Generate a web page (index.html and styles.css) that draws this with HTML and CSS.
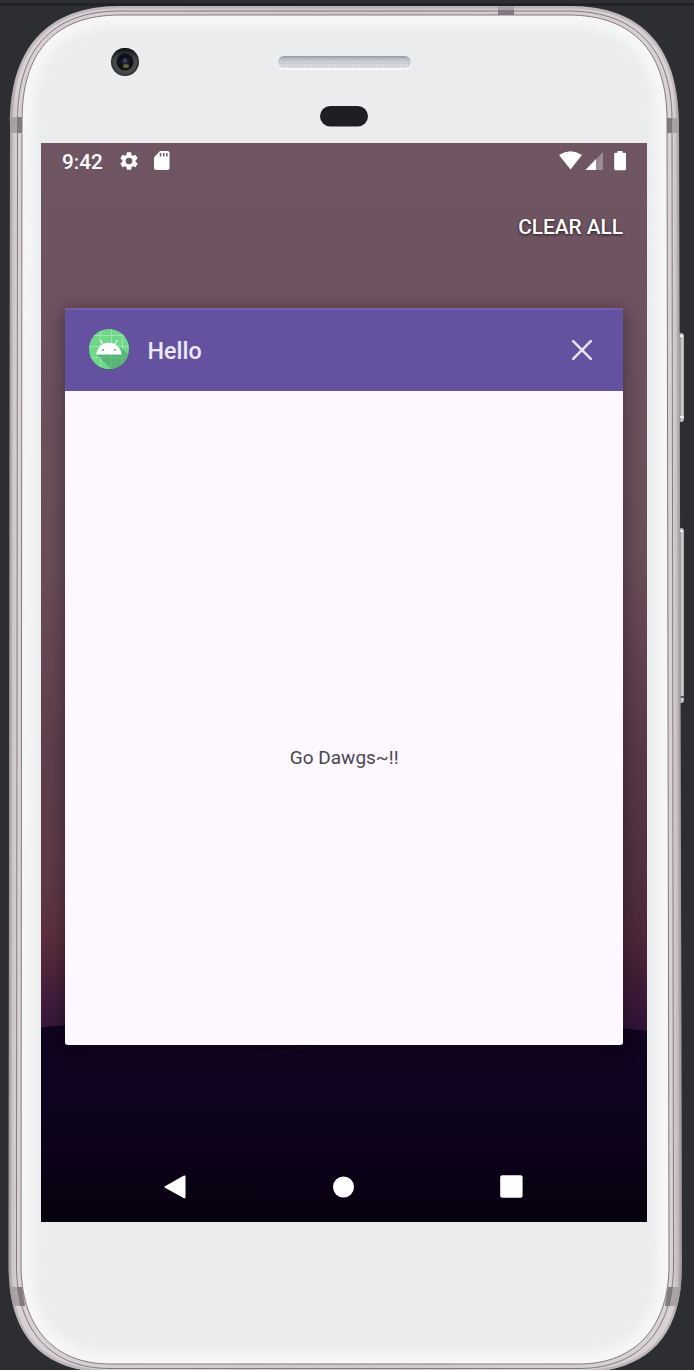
FILE: index.html
```html
<!DOCTYPE html>
<html lang="en">
<head>
<meta charset="utf-8">
<title>Recent apps</title>
<link rel="stylesheet" href="styles.css">
</head>
<body>
<div class="stage">
  <svg class="shell" width="694" height="1370" viewBox="0 0 694 1370" aria-hidden="true">
    <defs>
      <linearGradient id="rim" x1="8" x2="682" y1="0" y2="0" gradientUnits="userSpaceOnUse">
        <stop offset="0" stop-color="#a89fa4"/><stop offset=".006" stop-color="#cac3c6"/><stop offset=".014" stop-color="#d8d2d5"/>
        <stop offset=".5" stop-color="#cec8ca"/>
        <stop offset=".986" stop-color="#d8d2d4"/><stop offset=".994" stop-color="#c2bbbe"/><stop offset="1" stop-color="#a69da1"/>
      </linearGradient>
      <linearGradient id="volume" x1="0" x2="1" y1="0" y2="0">
        <stop offset="0" stop-color="#8f9292"/><stop offset=".5" stop-color="#8d9290"/><stop offset=".75" stop-color="#d0d6d2"/><stop offset="1" stop-color="#a5aaa7"/>
      </linearGradient>
      <linearGradient id="grille" x1="0" x2="0" y1="0" y2="1">
        <stop offset="0" stop-color="#989aa3"/><stop offset=".35" stop-color="#c9cbd3"/><stop offset="1" stop-color="#e6e7eb"/>
      </linearGradient>
      <pattern id="mesh" width="3" height="3" patternUnits="userSpaceOnUse"><path d="M0 .5H3M.5 0V3" stroke="#b4b7c4" stroke-width=".6" opacity=".55"/></pattern>
      <radialGradient id="lens"><stop offset="0" stop-color="#252a42"/><stop offset=".45" stop-color="#0b0d12"/><stop offset=".58" stop-color="#17181a"/><stop offset=".65" stop-color="#4b4d50"/><stop offset=".86" stop-color="#414346"/><stop offset="1" stop-color="#222426"/></radialGradient>
      <linearGradient id="lensShade" x1="0" x2="0" y1="0" y2="1"><stop offset="0" stop-color="#0c0d0e" stop-opacity=".9"/><stop offset=".4" stop-color="#0c0d0e" stop-opacity="0"/></linearGradient>
      <filter id="soft" x="-10%" y="-10%" width="120%" height="120%"><feGaussianBlur stdDeviation="5"/></filter>
      <clipPath id="faceClip"><path d="M22 120C22 55 52 15 120 15H568C636 15 667 55 667 120L669 1265C669 1325 637 1364 579 1364H110C52 1364 21 1325 21 1265Z"/></clipPath>
      <clipPath id="bodyClip"><path d="M10 125C10 50 45 6 120 6H570C645 6 679 50 679 125L682 1265C682 1340 645 1373 575 1373H115C45 1373 8.500 1340 8.500 1265Z"/></clipPath>
    </defs>
    <path d="M0 4.500H694" stroke="#1d1e21" stroke-width="2"/>
    <rect x="676" y="333" width="8" height="89" rx="3" fill="url(#volume)"/>
    <path d="M680 336H683M680 417H684" stroke="#eceeed" stroke-width="2"/>
    <rect x="676" y="528" width="8" height="175" rx="3" fill="url(#volume)"/>
    <path d="M680 531H683" stroke="#eceeed" stroke-width="2"/><path d="M680 697H684" stroke="#5d6260" stroke-width="2"/>
    <path d="M10 125C10 50 45 6 120 6H570C645 6 679 50 679 125L682 1265C682 1340 645 1373 575 1373H115C45 1373 8.500 1340 8.500 1265Z" fill="url(#rim)"/>
    <g clip-path="url(#bodyClip)">
      <path d="M10 125C10 50 45 6 120 6H570C645 6 679 50 679 125L682 1265C682 1340 645 1373 575 1373H115C45 1373 8.500 1340 8.500 1265Z" fill="none" stroke="#8f868b" stroke-width="5" opacity=".35"/>
      <path d="M17.500 120C17.500 52 50 11 120 11H568C638 11 672 52 672 120L673.500 1265C673.500 1329 640 1368.500 579 1368.500H110C49 1368.500 16.500 1329 16.500 1265Z" fill="none" stroke="#85797f" stroke-width="1"/>
      <path d="M9 117H22V133H9ZM498 4H514V15H498ZM667 118H681V133H667ZM8 1287H22L25 1306H8ZM668 1287H683V1306H665Z" fill="#a29ca0" opacity=".85"/>
      <path d="M17 117H22V133H17ZM498 10H514V15H498ZM667 118H672V133H667ZM17 1287H22L25 1306H20ZM668 1287H673L670 1306H665Z" fill="#777176" opacity=".8"/>
    </g>
    <g clip-path="url(#faceClip)">
      <path d="M0 0H694V1370H0Z" fill="#ebecee"/>
      <path d="M22 120C22 55 52 15 120 15H568C636 15 667 55 667 120L669 1265C669 1325 637 1364 579 1364H110C52 1364 21 1325 21 1265Z" fill="none" stroke="#f6f6f8" stroke-width="24" filter="url(#soft)"/>
    </g>
    <path d="M22 120C22 55 52 15 120 15H568C636 15 667 55 667 120L669 1265C669 1325 637 1364 579 1364H110C52 1364 21 1325 21 1265Z" fill="none" stroke="#81787d" stroke-width="1"/>
    <circle cx="125" cy="62" r="14" fill="url(#lens)"/><circle cx="125" cy="62" r="14" fill="url(#lensShade)"/>
    <circle cx="125" cy="60.500" r="2" fill="#3b426b"/><ellipse cx="126" cy="66" rx="3" ry="2" fill="#62652d"/>
    <rect x="277.500" y="56.500" width="134" height="13.500" rx="6.500" fill="#f8f8f9"/>
    <rect x="278" y="56" width="133" height="12" rx="6" fill="url(#grille)"/>
    <rect x="278" y="58" width="133" height="10" rx="5" fill="url(#mesh)"/>
    <rect x="320" y="106" width="48" height="20.500" rx="10.250" fill="#1d1f22"/>
  </svg>

  <main class="screen">
    <svg class="wallpaper" width="606" height="1079" viewBox="0 0 606 1079" aria-hidden="true">
      <defs>
        <linearGradient id="sky" x1="0" x2="0" y1="0" y2="1">
          <stop offset="0" stop-color="#6f5662"/><stop offset=".2" stop-color="#6d515e"/><stop offset=".4" stop-color="#694c58"/><stop offset=".57" stop-color="#603d4c"/>
          <stop offset=".68" stop-color="#5d3947"/><stop offset=".735" stop-color="#5c2f3d"/><stop offset=".78" stop-color="#48203b"/><stop offset=".83" stop-color="#30143a"/>
        </linearGradient>
        <linearGradient id="ground" x1="0" x2="0" y1="880" y2="1079" gradientUnits="userSpaceOnUse">
          <stop offset="0" stop-color="#10041f"/><stop offset=".4" stop-color="#0f0420"/><stop offset=".75" stop-color="#0b0116"/><stop offset="1" stop-color="#07000d"/>
        </linearGradient>
        <linearGradient id="dusk" x1="0" x2="0" y1="400" y2="900" gradientUnits="userSpaceOnUse"><stop offset="0" stop-color="#200b2b" stop-opacity="0"/><stop offset=".7" stop-color="#200b2b" stop-opacity=".22"/><stop offset="1" stop-color="#200b2b" stop-opacity=".22"/></linearGradient>
      </defs>
      <path d="M0 0H606V1079H0Z" fill="url(#sky)"/>
      <path d="M560 400H606V900H560Z" fill="url(#dusk)"/>
      <path d="M0 884.500Q300 850 606 888V1079H0Z" fill="url(#ground)"/>
      <path d="M205 914Q240 910 272 903" fill="none" stroke="#2a1020" stroke-width="1" opacity=".7"/>
    </svg>

    <header class="status">
      <span class="clock">9:42</span>
      <svg class="gear" width="22" height="22" viewBox="0 0 24 24"><path fill="#fff" d="M19.140 12.940c.04-.3.060-.61.060-.94s-.02-.64-.07-.94l2.030-1.580a.49.49 0 0 0 .12-.61l-1.920-3.320a.49.49 0 0 0-.59-.22l-2.390.96a7 7 0 0 0-1.620-.94l-.36-2.540a.48.48 0 0 0-.48-.41h-3.840a.48.48 0 0 0-.47.410l-.36 2.540c-.59.240-1.130.57-1.620.94l-2.390-.96a.48.48 0 0 0-.59.220L2.740 8.870a.47.47 0 0 0 .12.610l2.030 1.580a7 7 0 0 0 0 1.880l-2.030 1.580a.49.49 0 0 0-.12.610l1.920 3.320c.12.220.37.290.59.220l2.390-.96c.5.380 1.030.7 1.620.94l.36 2.540c.05.240.24.410.48.410h3.840c.24 0 .44-.17.470-.41l.36-2.540a7 7 0 0 0 1.620-.94l2.390.96c.22.080.47 0 .59-.22l1.920-3.320a.47.47 0 0 0-.12-.61zM12 15.600a3.600 3.600 0 1 1 0-7.200 3.600 3.600 0 0 1 0 7.200"/></svg>
      <svg class="sd" width="16" height="20" viewBox="0 0 16 20"><path fill="#fff" d="M6 0H13.500Q15.500 0 15.500 2V17Q15.500 19 13.500 19H2Q0 19 0 17V6.500Z"/><path d="M6.500 2V5.500M9.700 2V5.500M12.800 2V5.500" stroke="#6f5662" stroke-width="1.500"/></svg>
      <svg class="signals" width="68" height="20" viewBox="0 0 68 20">
        <path d="M0 3.900Q11.500-3.300 23 3.900L11.500 18.500Z" fill="#fff"/>
        <path d="M26.500 19L44 1V19Z" fill="#9b8a94"/><path d="M26.500 19L37 8V19Z" fill="#fff"/>
        <path d="M58.500 0H63.500V1.700H65.500Q67 1.700 67 3V18Q67 19.300 65.700 19.300H56.500Q55.200 19.300 55.200 18V3Q55.200 1.700 56.500 1.700H58.500Z" fill="#fff"/>
      </svg>
    </header>

    <div class="actions"><span class="clear">CLEAR ALL</span></div>

    <section class="task">
      <div class="task-bar">
        <svg class="app-icon" width="40" height="41" viewBox="0 0 40 41">
          <defs><clipPath id="disc"><circle cx="20" cy="20" r="20"/></clipPath></defs>
          <circle cx="20" cy="20.700" r="20" fill="#43705f"/><circle cx="20" cy="20" r="20" fill="#70d88b"/>
          <g clip-path="url(#disc)">
            <path d="M0 6.500H40M0 17.500H40M0 28.500H40M11.500 0V40M22.500 0V40M33.500 0V40" stroke="#a5e8b7" stroke-width=".8"/>
            <path d="M7.500 25.500L27 45H45V30L31 18L32.500 25.500Z" fill="#4aa56a" opacity=".65"/>
          </g>
          <path d="M7.300 25.600C8 18.500 13 13.700 19.900 13.700S31.800 18.500 32.500 25.600Z" fill="#fff"/>
          <path d="M14 15.500L11.500 11M25.800 15.500L28.300 11" stroke="#fff" stroke-width="1.200"/>
          <circle cx="14" cy="21" r="1" fill="#5a9c71"/><circle cx="26" cy="21" r="1" fill="#5a9c71"/>
        </svg>
        <h1 class="task-title">Hello</h1>
        <svg class="close" width="20" height="20" viewBox="0 0 20 20"><path d="M1.200 1.200L18.800 18.800M18.800 1.200L1.200 18.800" stroke="#e6e1ef" stroke-width="2.600" stroke-linecap="square"/></svg>
      </div>
      <div class="task-body"><p class="message">Go Dawgs~!!</p></div>
    </section>

    <nav class="nav">
      <svg width="22" height="24" viewBox="0 0 22 24"><path d="M1 11.300L19.500.8Q21.500 0 21.500 1.800V22.200Q21.500 24 19.500 23L1 12.700Q-.2 12 1 11.300Z" fill="#fff"/></svg>
      <svg width="22" height="22" viewBox="0 0 22 22"><circle cx="11.500" cy="11" r="10.500" fill="#fff"/></svg>
      <svg width="23" height="23" viewBox="0 0 23 23"><rect x=".2" y=".3" width="22.400" height="22.400" rx="2" fill="#fff"/></svg>
    </nav>
  </main>
</div>
</body>
</html>
```
FILE: styles.css
```css
* { box-sizing: border-box; }
body { margin: 0; background: #2c2e31; font-family: Roboto, sans-serif; }
.stage { position: relative; width: 694px; height: 1370px; padding: 143px 47px 0 41px; overflow: hidden; }
.shell { position: absolute; inset: 0; }
.screen { position: relative; display: flex; flex-direction: column; height: 1079px; overflow: hidden; }
.wallpaper { position: absolute; inset: 0; }
.status { position: relative; display: flex; align-items: center; height: 37px; padding: 0 20px 1px 21px; color: #fff; }
.clock { width: 56px; padding-top: 2px; font-size: 20.7px; font-weight: 500; line-height: 35px; }
.sd { margin-left: 14px; }
.signals { margin-left: auto; }
.actions { position: relative; display: flex; justify-content: flex-end; height: 128px; padding: 31px 24px 0 0; }
.clear { color: #fff; font-size: 20.8px; font-weight: 500; line-height: 32px; text-shadow: 0 1px 3px rgba(0, 0, 0, .7); }
.task { position: relative; display: flex; flex-direction: column; height: 737px; margin: 0 23.6px 0 24px; border-radius: 3px; overflow: hidden; background: #fdf8ff; box-shadow: 0 3px 18px rgba(0, 0, 0, .4); }
.task-bar { display: flex; align-items: center; height: 83px; padding: 0 31px 2px 24px; background: #64519f; border-top: 2px solid #7462ae; }
.task-title { margin: 2px auto 0 18.5px; color: #ece8f3; font-size: 23.3px; font-weight: 500; line-height: 30px; }
.task-body { display: flex; justify-content: center; flex: 1; padding-top: 354px; }
.message { margin: 0; color: #4b474e; font-size: 19px; line-height: 26px; }
.nav { position: relative; display: flex; align-items: center; justify-content: space-between; height: 71px; margin-top: auto; padding: 0 124px 0 123px; }
```
